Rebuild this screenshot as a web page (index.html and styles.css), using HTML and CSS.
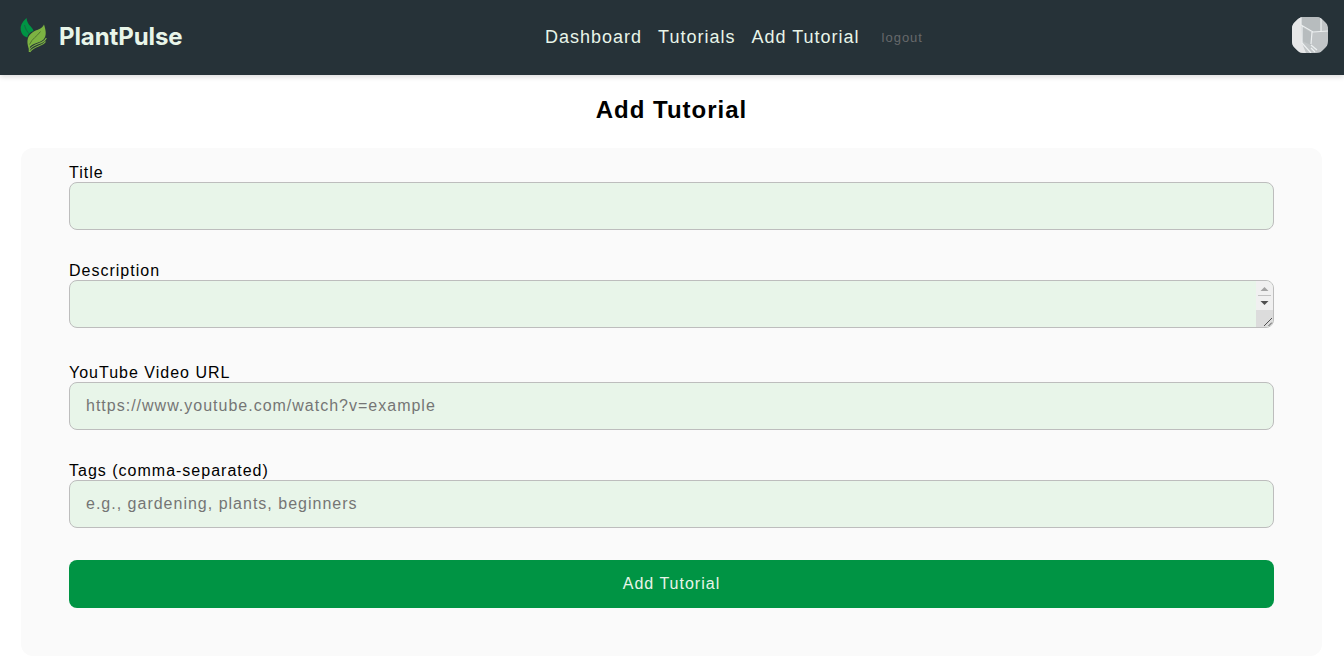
FILE: index.html
```html
<!DOCTYPE html>
<html lang="en">
<head>
<meta charset="utf-8">
<title>PlantPulse - Add Tutorial</title>
<link rel="stylesheet" href="styles.css">
</head>
<body>
<header class="navbar">
  <a class="brand">
    <svg class="brand-leaf" width="28" height="36" viewBox="0 0 28 36">
      <path fill="#009444" d="M6.500 0C2 4 0 8 .7 12c.7 4 3 6.500 6.600 7.500 .4-3 2.700-5.500 6.200-6.500C12.500 8.500 7.500 8 6.500 0z"/>
      <path fill="none" stroke="#1b6044" stroke-width=".9" d="M4.500 7C5.500 11.500 7.500 14 9.500 16"/>
      <path fill="#7cb342" d="M24 6.500c2 6 2.800 11.500-.5 15-4 4.200-11 2.500-14.700 9C6 23 7.500 17.500 13 14 17.500 11.300 22 11 24 6.500z"/>
      <path fill="none" stroke="#4b702f" stroke-width=".9" d="M9.500 26.500c2.500-6 7.500-8 11-13"/>
      <path fill="none" stroke="#7cb342" stroke-width="1.100" d="M26.300 20c-2.500 7-12.500 4.500-16.500 11.500M25.500 23.500c-3 5-12 4-15.700 10.500M9.300 28v6"/>
    </svg>
    <span class="brand-name">PlantPulse</span>
  </a>
  <nav class="links">
    <a>Dashboard</a>
    <a>Tutorials</a>
    <a>Add Tutorial</a>
    <a class="logout">logout</a>
  </nav>
  <svg class="avatar" width="36" height="36" viewBox="0 0 36 36">
    <path fill="#c1c5c7" d="M0 0h36v36H0z"/>
    <path fill="#e6e7e8" d="M0 0h9v9l1 17 4 10H0z"/>
    <path fill="#b7bcbe" d="M9 0h20v14l-8 1L9 8zM10 10l10 6-1 12-9-4z"/>
    <path fill="none" stroke="#edf0f1" stroke-width="1.200" d="M9 0v8l12 7 15-1M29 0v14M10 9v17l9 10M20 15l-1 12M19 28l6 5M19 31l4 4"/>
  </svg>
</header>
<main class="page">
  <h1 class="heading">Add Tutorial</h1>
  <form class="panel">
    <label class="field">Title<input class="control" type="text"></label>
    <label class="field field-area">Description
      <span class="area-wrap">
        <textarea class="control"></textarea>
        <svg class="scroller" width="17" height="46" viewBox="0 0 17 46">
          <path fill="#f0f0f0" d="M0 0h17v29H0z"/>
          <path fill="#dcdcdc" d="M0 29h17v17H0z"/>
          <path fill="#a3a3a3" d="M4.500 10l4-4 4 4z"/>
          <path fill="#c1c1c1" d="M2 14h13v1H2z"/>
          <path fill="#505050" d="M4.500 20h8l-4 4z"/>
          <path fill="none" stroke="#505050" d="M8 45l8-8M12.500 45l3.500-3.500"/>
        </svg>
      </span>
    </label>
    <label class="field">YouTube Video URL<input class="control" type="text" placeholder="https://www.youtube.com/watch?v=example"></label>
    <label class="field">Tags (comma-separated)<input class="control" type="text" placeholder="e.g., gardening, plants, beginners"></label>
    <button class="submit" type="button">Add Tutorial</button>
  </form>
</main>
</body>
</html>
```

FILE: styles.css
```css
* { box-sizing: border-box; }
body {
  margin: 0;
  background: #fff;
  color: #000;
  font: 16px/18px "Liberation Sans", Arial, sans-serif;
  letter-spacing: 1px;
  overflow: hidden;
}
.navbar {
  display: flex;
  justify-content: space-between;
  align-items: center;
  height: 75px;
  padding: 0 16px 4px 20px;
  background: #263238;
  box-shadow: 0 2px 5px rgba(0, 0, 0, .14);
}
.brand { display: flex; align-items: center; gap: 11px; width: 156px; }
.brand-leaf { flex: none; }
.brand-name {
  padding-top: 2px;
  color: #e8f5e9;
  font: 700 24px/30px Inter, sans-serif;
  letter-spacing: -.1px;
}
.links {
  display: flex;
  align-items: center;
  gap: 16px;
  padding-top: 2px;
  color: #e8f5e9;
  font-size: 18px;
  line-height: 22px;
}
.logout { margin: 2px 0 0 6px; color: #66696b; font-size: 13px; }
.avatar {
  margin-bottom: 1px;
  border-radius: 12px;
  clip-path: polygon(8px 0, 28px 0, 36px 8px, 36px 28px, 28px 36px, 8px 36px, 0 28px, 0 8px);
}
.page { padding: 21px 22px 0 21px; }
.heading { margin: 0 0 25px; font-size: 24px; line-height: 27px; text-align: center; }
.panel {
  display: flex;
  flex-direction: column;
  height: 508px;
  padding: 16px 48px 0;
  border-radius: 12px;
  background: #fafafa;
}
.field { display: block; height: 98px; }
.field-area { height: 102px; }
.control {
  display: block;
  width: 100%;
  height: 48px;
  margin: 0;
  padding: 0 16px;
  border: 1px solid #bdbdbd;
  border-radius: 8px;
  background: #e8f5e9;
  font: inherit;
  letter-spacing: inherit;
  resize: none;
  overflow: hidden;
  outline: none;
}
.control::placeholder { color: #757575; }
.area-wrap { display: block; position: relative; }
.scroller {
  position: absolute;
  top: 1px;
  right: 1px;
  border-radius: 0 7px 7px 0;
}
.submit {
  height: 48px;
  padding: 0;
  border: 0;
  border-radius: 8px;
  background: #009444;
  color: #e8f5e9;
  font: inherit;
  letter-spacing: inherit;
}
```
